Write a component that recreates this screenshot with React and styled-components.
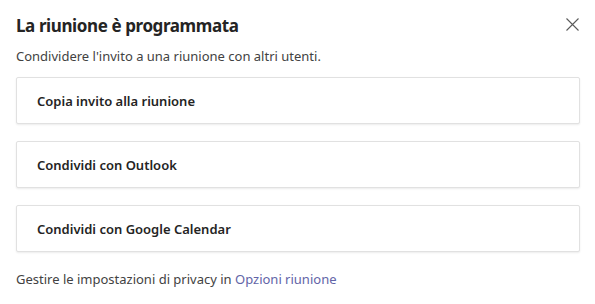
import React from "react";
import styled, { createGlobalStyle } from "styled-components";

const Global = createGlobalStyle`
  html, body { margin: 0; padding: 0; background: #fff; }
  body { font-family: "Segoe UI", "Noto Sans", "Open Sans", sans-serif; }
`;

const Dialog = styled.div`
  width: 595px;
  height: 304px;
  box-sizing: border-box;
  padding: 11px 15px 0 16px;
  display: flex;
  flex-direction: column;
  background: #fff;
`;

const Header = styled.div`
  display: flex;
  align-items: center;
  justify-content: space-between;
  height: 28px;
`;

const Title = styled.h1`
  margin: 0;
  font-size: 17px;
  font-weight: 700;
  color: #242424;
  letter-spacing: -0.4px;
`;

const CloseButton = styled.button`
  border: 0;
  background: none;
  padding: 0;
  width: 14px;
  height: 14px;
  display: flex;
  align-items: center;
  justify-content: center;
  margin-right: 1px;
  margin-top: -2px;
  cursor: pointer;
`;

const Subtitle = styled.p`
  margin: 8px 0 0;
  font-size: 13px;
  color: #424242;
  line-height: 18px;
`;

const List = styled.div`
  display: flex;
  flex-direction: column;
  gap: 17px;
  margin-top: 12px;
`;

const Card = styled.button`
  height: 47px;
  box-sizing: border-box;
  width: 100%;
  border: 1px solid #e1e1e1;
  border-radius: 2px;
  background: #fff;
  box-shadow: 0 1px 2px rgba(0, 0, 0, 0.08);
  text-align: left;
  padding: 0 20px;
  font-family: inherit;
  font-size: 13px;
  font-weight: 600;
  color: #242424;
  cursor: pointer;
`;

const Footer = styled.p`
  margin: 18px 0 0;
  font-size: 13px;
  color: #424242;
  line-height: 18px;
`;

const Link = styled.a`
  color: #6264a7;
  text-decoration: none;
`;

export default function App() {
  return (
    <>
      <Global />
      <Dialog>
        <Header>
          <Title>La riunione è programmata</Title>
          <CloseButton aria-label="Chiudi">
            <svg width="13" height="13" viewBox="0 0 13 13">
              <path d="M0.5 0.5 L12.5 12.5 M12.5 0.5 L0.5 12.5" stroke="#5a5a5a" strokeWidth="1.1" />
            </svg>
          </CloseButton>
        </Header>
        <Subtitle>Condividere l'invito a una riunione con altri utenti.</Subtitle>
        <List>
          <Card>Copia invito alla riunione</Card>
          <Card>Condividi con Outlook</Card>
          <Card>Condividi con Google Calendar</Card>
        </List>
        <Footer>
          Gestire le impostazioni di privacy in <Link href="#">Opzioni riunione</Link>
        </Footer>
      </Dialog>
    </>
  );
}
